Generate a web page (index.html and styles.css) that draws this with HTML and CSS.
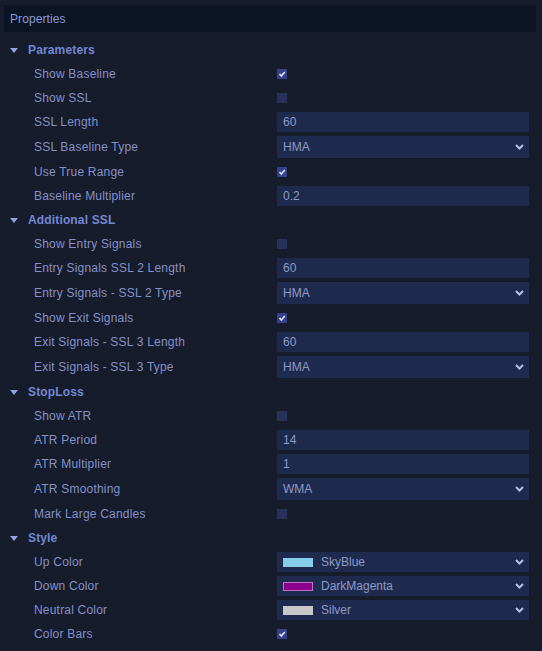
FILE: index.html
```html
<!DOCTYPE html>
<html>
<head>
<meta charset="utf-8">
<link rel="stylesheet" href="styles.css">
</head>
<body>
<div class="panel">
  <div class="title">Properties</div>

  <div class="sec"><span class="tri"></span>Parameters</div>
  <div class="row"><span class="lbl">Show Baseline</span><span class="cb on"><svg viewBox="0 0 10 10"><polyline points="2.5,5 4.3,7 7.8,3"/></svg></span></div>
  <div class="row"><span class="lbl">Show SSL</span><span class="cb"></span></div>
  <div class="row"><span class="lbl">SSL Length</span><span class="inp">60</span></div>
  <div class="row tall"><span class="lbl">SSL Baseline Type</span><span class="sel">HMA<svg class="chev" viewBox="0 0 9 6"><polyline points="1,1 4.5,4.5 8,1"/></svg></span></div>
  <div class="row"><span class="lbl">Use True Range</span><span class="cb on"><svg viewBox="0 0 10 10"><polyline points="2.5,5 4.3,7 7.8,3"/></svg></span></div>
  <div class="row"><span class="lbl">Baseline Multiplier</span><span class="inp">0.2</span></div>

  <div class="sec"><span class="tri"></span>Additional SSL</div>
  <div class="row"><span class="lbl">Show Entry Signals</span><span class="cb"></span></div>
  <div class="row"><span class="lbl">Entry Signals SSL 2 Length</span><span class="inp">60</span></div>
  <div class="row tall"><span class="lbl">Entry Signals - SSL 2 Type</span><span class="sel">HMA<svg class="chev" viewBox="0 0 9 6"><polyline points="1,1 4.5,4.5 8,1"/></svg></span></div>
  <div class="row"><span class="lbl">Show Exit Signals</span><span class="cb on"><svg viewBox="0 0 10 10"><polyline points="2.5,5 4.3,7 7.8,3"/></svg></span></div>
  <div class="row"><span class="lbl">Exit Signals - SSL 3 Length</span><span class="inp">60</span></div>
  <div class="row tall"><span class="lbl">Exit Signals - SSL 3 Type</span><span class="sel">HMA<svg class="chev" viewBox="0 0 9 6"><polyline points="1,1 4.5,4.5 8,1"/></svg></span></div>

  <div class="sec"><span class="tri"></span>StopLoss</div>
  <div class="row"><span class="lbl">Show ATR</span><span class="cb"></span></div>
  <div class="row"><span class="lbl">ATR Period</span><span class="inp">14</span></div>
  <div class="row"><span class="lbl">ATR Multiplier</span><span class="inp">1</span></div>
  <div class="row tall"><span class="lbl">ATR Smoothing</span><span class="sel">WMA<svg class="chev" viewBox="0 0 9 6"><polyline points="1,1 4.5,4.5 8,1"/></svg></span></div>
  <div class="row"><span class="lbl">Mark Large Candles</span><span class="cb"></span></div>

  <div class="sec"><span class="tri"></span>Style</div>
  <div class="row"><span class="lbl">Up Color</span><span class="sel csel"><span class="sw sky"></span>SkyBlue<svg class="chev" viewBox="0 0 9 6"><polyline points="1,1 4.5,4.5 8,1"/></svg></span></div>
  <div class="row"><span class="lbl">Down Color</span><span class="sel csel"><span class="sw mag"></span>DarkMagenta<svg class="chev" viewBox="0 0 9 6"><polyline points="1,1 4.5,4.5 8,1"/></svg></span></div>
  <div class="row"><span class="lbl">Neutral Color</span><span class="sel csel"><span class="sw sil"></span>Silver<svg class="chev" viewBox="0 0 9 6"><polyline points="1,1 4.5,4.5 8,1"/></svg></span></div>
  <div class="row"><span class="lbl">Color Bars</span><span class="cb on"><svg viewBox="0 0 10 10"><polyline points="2.5,5 4.3,7 7.8,3"/></svg></span></div>
</div>
</body>
</html>
```

FILE: styles.css
```css
html, body {
  margin: 0;
  padding: 0;
  background: #161c2b;
}
body {
  font-family: "Liberation Sans", Arial, sans-serif;
  font-size: 12px;
  color: #8591c8;
  width: 542px;
  height: 651px;
  overflow: hidden;
}
.panel {
  padding-top: 5px;
}
.title {
  margin: 0 6px 6px 4px;
  height: 27px;
  line-height: 29px;
  background: #0c1322;
  padding-left: 6px;
  color: #8a9ad4;
  letter-spacing: 0.1px;
}
.sec {
  height: 24px;
  display: flex;
  align-items: center;
  font-weight: bold;
  color: #7388d4;
  letter-spacing: 0.15px;
}
.tri {
  width: 0;
  height: 0;
  border-left: 4px solid transparent;
  border-right: 4px solid transparent;
  border-top: 5px solid #91a2de;
  margin-left: 10px;
  margin-right: 10px;
}
.row {
  height: 24px;
  display: grid;
  grid-template-columns: 277px 252px;
  align-items: center;
}
.row.tall {
  height: 26px;
}
.lbl {
  padding-left: 34px;
  letter-spacing: 0.2px;
  white-space: nowrap;
}
.cb {
  width: 10px;
  height: 10px;
  background: #283259;
  display: block;
}
.cb.on {
  background: #35428a;
}
.cb svg {
  display: block;
  width: 10px;
  height: 10px;
}
.cb svg polyline {
  fill: none;
  stroke: #dfe4ff;
  stroke-width: 1.6;
}
.inp {
  height: 20px;
  line-height: 20px;
  background: #1e2a4b;
  padding-left: 6px;
  color: #8e9ac6;
  box-sizing: border-box;
}
.sel {
  height: 22px;
  background: #1f2b4e;
  padding-left: 6px;
  padding-right: 5px;
  color: #8e9ac6;
  display: flex;
  align-items: center;
  box-sizing: border-box;
}
.sel.csel {
  height: 20px;
}
.chev {
  width: 9px;
  height: 6px;
  margin-left: auto;
}
.chev polyline {
  fill: none;
  stroke: #b6bfe8;
  stroke-width: 2;
}
.sw {
  width: 30px;
  height: 9px;
  margin-right: 8px;
  box-sizing: border-box;
}
.sky { background: #87ceeb; }
.mag { background: #8b008b; border: 1px solid #c070c8; }
.sil { background: #c8c8c8; }
```
